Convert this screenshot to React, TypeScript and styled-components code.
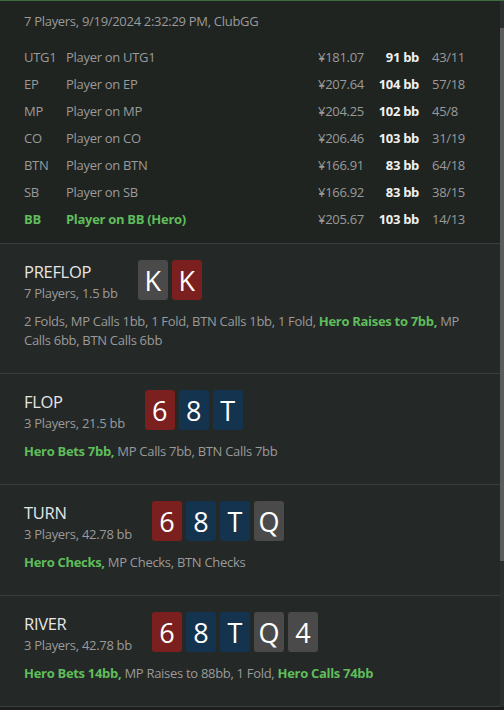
import React from "react";
import styled, { createGlobalStyle } from "styled-components";

const GlobalStyle = createGlobalStyle`
  html, body {
    margin: 0;
    padding: 0;
    background: #1a1d1b;
  }
  body {
    font-family: "Open Sans", "Noto Sans", sans-serif;
    letter-spacing: -0.3px;
    -webkit-font-smoothing: antialiased;
  }
`;

type Suit = "red" | "blue" | "grey";

const Panel = styled.div`
  display: flex;
  width: 504px;
  height: 706px;
  overflow: hidden;
  background: #242827;
  border-top: 1px solid #3d6e3e;
`;

const Content = styled.div`
  flex: 1;
  min-width: 0;
`;

const Header = styled.div`
  background: #1f2421;
  padding: 10px 24px 11px;
  border-bottom: 1px solid #3a3e3c;
`;

const Meta = styled.div`
  font-size: 13px;
  line-height: 20px;
  color: #9a9a9a;
`;

const PlayerTable = styled.div`
  margin-top: 12px;
  display: grid;
  grid-template-columns: 42px 1fr 52px 49px 57px;
  grid-auto-rows: 27px;
  align-items: center;
  font-size: 13px;
  color: #9a9a9a;
`;

const Cell = styled.div<{ $hero?: boolean }>`
  color: ${(p) => (p.$hero ? "#5fbd5b" : "inherit")};
  font-weight: ${(p) => (p.$hero ? 700 : 400)};
  white-space: nowrap;
`;

const Stack = styled.div`
  text-align: right;
  font-weight: 700;
  color: #f0f0f0;
`;

const Ratio = styled.div`
  padding-left: 13px;
`;

const Street = styled.section`
  padding: 16px 24px 23px;
  border-bottom: 1px solid #3a3e3c;
`;

const StreetHead = styled.div`
  display: flex;
  align-items: flex-start;
  gap: 20px;
  height: 42px;
`;

const StreetInfo = styled.div`
  display: flex;
  flex-direction: column;
`;

const StreetName = styled.div`
  font-size: 16.5px;
  line-height: 24px;
  color: #e6e6e6;
`;

const StreetPot = styled.div`
  font-size: 13px;
  line-height: 18px;
  color: #9a9a9a;
`;

const Board = styled.div`
  display: flex;
  gap: 4px;
`;

const Card = styled.div<{ $suit: Suit }>`
  width: 30px;
  height: 40px;
  border-radius: 3px;
  display: flex;
  align-items: center;
  justify-content: center;
  font-size: 27px;
  letter-spacing: 0;
  color: #ffffff;
  background: ${(p) =>
    p.$suit === "red" ? "#7b1f1f" : p.$suit === "blue" ? "#14334f" : "#4a4a4a"};
`;

const Actions = styled.div`
  margin-top: 10px;
  font-size: 13px;
  line-height: 19px;
  color: #9a9a9a;
`;

const HeroAction = styled.span`
  color: #5fbd5b;
  font-weight: 700;
`;

const ScrollTrack = styled.div`
  flex: 0 0 4px;
  background: #2b2f2d;
`;

const ScrollThumb = styled.div`
  margin-top: 27px;
  height: 533px;
  background: #5c5c5c;
`;

const players = [
  { pos: "UTG1", name: "Player on UTG1", amount: "¥181.07", bb: "91 bb", ratio: "43/11" },
  { pos: "EP", name: "Player on EP", amount: "¥207.64", bb: "104 bb", ratio: "57/18" },
  { pos: "MP", name: "Player on MP", amount: "¥204.25", bb: "102 bb", ratio: "45/8" },
  { pos: "CO", name: "Player on CO", amount: "¥206.46", bb: "103 bb", ratio: "31/19" },
  { pos: "BTN", name: "Player on BTN", amount: "¥166.91", bb: "83 bb", ratio: "64/18" },
  { pos: "SB", name: "Player on SB", amount: "¥166.92", bb: "83 bb", ratio: "38/15" },
  { pos: "BB", name: "Player on BB (Hero)", amount: "¥205.67", bb: "103 bb", ratio: "14/13", hero: true },
];

type Action = { text: string; hero?: boolean };

const streets: {
  name: string;
  pot: string;
  cards: [string, Suit][];
  actions: Action[];
}[] = [
  {
    name: "PREFLOP",
    pot: "7 Players, 1.5 bb",
    cards: [
      ["K", "grey"],
      ["K", "red"],
    ],
    actions: [
      { text: "2 Folds, MP Calls 1bb, 1 Fold, BTN Calls 1bb, 1 Fold, " },
      { text: "Hero Raises to 7bb,", hero: true },
      { text: " MP Calls 6bb, BTN Calls 6bb" },
    ],
  },
  {
    name: "FLOP",
    pot: "3 Players, 21.5 bb",
    cards: [
      ["6", "red"],
      ["8", "blue"],
      ["T", "blue"],
    ],
    actions: [
      { text: "Hero Bets 7bb,", hero: true },
      { text: " MP Calls 7bb, BTN Calls 7bb" },
    ],
  },
  {
    name: "TURN",
    pot: "3 Players, 42.78 bb",
    cards: [
      ["6", "red"],
      ["8", "blue"],
      ["T", "blue"],
      ["Q", "grey"],
    ],
    actions: [
      { text: "Hero Checks,", hero: true },
      { text: " MP Checks, BTN Checks" },
    ],
  },
  {
    name: "RIVER",
    pot: "3 Players, 42.78 bb",
    cards: [
      ["6", "red"],
      ["8", "blue"],
      ["T", "blue"],
      ["Q", "grey"],
      ["4", "grey"],
    ],
    actions: [
      { text: "Hero Bets 14bb,", hero: true },
      { text: " MP Raises to 88bb, 1 Fold, " },
      { text: "Hero Calls 74bb", hero: true },
    ],
  },
];

export default function App() {
  return (
    <>
      <GlobalStyle />
      <Panel>
        <Content>
          <Header>
            <Meta>7 Players, 9/19/2024 2:32:29 PM, ClubGG</Meta>
            <PlayerTable>
              {players.map((p) => (
                <React.Fragment key={p.pos}>
                  <Cell $hero={p.hero}>{p.pos}</Cell>
                  <Cell $hero={p.hero}>{p.name}</Cell>
                  <Cell>{p.amount}</Cell>
                  <Stack>{p.bb}</Stack>
                  <Ratio>{p.ratio}</Ratio>
                </React.Fragment>
              ))}
            </PlayerTable>
          </Header>
          {streets.map((s) => (
            <Street key={s.name}>
              <StreetHead>
                <StreetInfo>
                  <StreetName>{s.name}</StreetName>
                  <StreetPot>{s.pot}</StreetPot>
                </StreetInfo>
                <Board>
                  {s.cards.map(([rank, suit], i) => (
                    <Card key={i} $suit={suit}>
                      {rank}
                    </Card>
                  ))}
                </Board>
              </StreetHead>
              <Actions>
                {s.actions.map((a, i) =>
                  a.hero ? <HeroAction key={i}>{a.text}</HeroAction> : <span key={i}>{a.text}</span>
                )}
              </Actions>
            </Street>
          ))}
        </Content>
        <ScrollTrack>
          <ScrollThumb />
        </ScrollTrack>
      </Panel>
    </>
  );
}
